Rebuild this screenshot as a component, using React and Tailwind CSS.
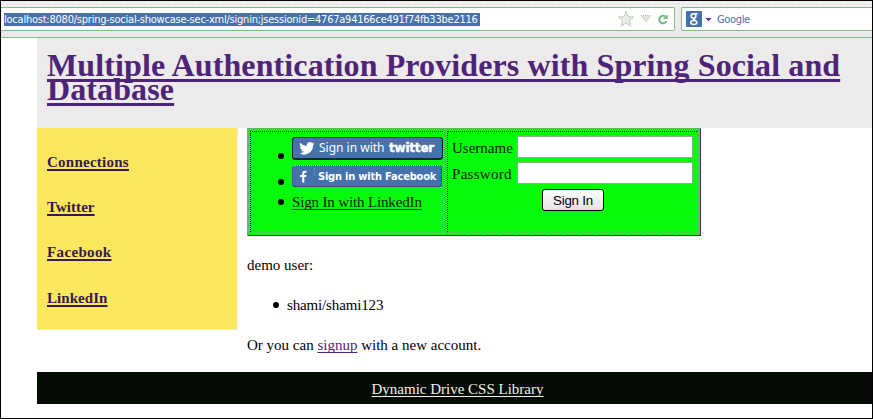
import React from 'react';

const DITHER = 'bg-[#edeaec] bg-[radial-gradient(#ffffff_0.7px,transparent_0.8px)] bg-[size:3px_3px]';

function AddressBar() {
  return (
    <div className="flex h-[24px] w-[674px] shrink-0 items-center rounded-r-[2px] border border-l-0 border-[#82bd87] bg-white pl-[3px]">
      <span className="block h-[13px] w-[476px] shrink-0 whitespace-nowrap bg-[#4672ac] font-['DejaVu_Sans_Condensed','DejaVu_Sans',sans-serif] text-[11px] leading-[13px] tracking-[-0.23px] text-white">
        localhost:8080/spring-social-showcase-sec-xml/signin;jsessionid=4767a94166ce491f74fb33be2116
      </span>
      <svg className="ml-[137px] shrink-0" width="18" height="18" viewBox="0 0 18 18">
        <path d="M9 1.5 11.2 6.7 16.7 7 12.5 10.7 13.9 16 9 13.2 4.1 16 5.5 10.7 1.3 7 6.8 6.7Z" fill="#edeaec" stroke="#9cc4a0" strokeDasharray="2 1" />
      </svg>
      <svg className="ml-[5px] shrink-0" width="12" height="10" viewBox="0 0 12 10">
        <path d="M1 1.500H11L6 8Z" fill="#e3e3e1" />
        <path d="M1 1.500H11L6 8Z" fill="none" stroke="#9dcca0" strokeDasharray="1 1" />
      </svg>
      <svg className="ml-[5px] shrink-0" width="12" height="13" viewBox="0 0 14 14">
        <path d="M9.800 3.600A4.400 4.400 0 1 0 11 8.800" fill="none" stroke="#76b57d" strokeWidth="2.300" />
        <path d="M12.500 1V6.500H7Z" fill="#76b57d" />
      </svg>
    </div>
  );
}

function SearchBar() {
  return (
    <div className="ml-[6px] flex h-[24px] flex-1 items-center rounded-l-[2px] border border-r-0 border-[#82bd87] bg-white pl-[4px]">
      <svg className="shrink-0" width="16" height="16" viewBox="0 0 16 16">
        <rect width="16" height="16" rx="1" fill="#4672ac" />
        <g fill="none" stroke="#fff" strokeWidth="1.500">
          <ellipse cx="7.500" cy="5" rx="2.400" ry="2.200" />
          <path d="M7.500 2.700H11.500M8 7.300C6.500 8.300 8 8.700 9.300 9.200" />
          <ellipse cx="7.800" cy="11.400" rx="3" ry="2" />
        </g>
      </svg>
      <svg className="ml-[3px] shrink-0" width="7" height="5" viewBox="0 0 7 5">
        <path d="M0.500 1H6.500L3.500 4.300Z" fill="#4e2a80" />
      </svg>
      <span className="ml-[5px] mt-[2px] font-['DejaVu_Sans_Condensed','DejaVu_Sans',sans-serif] text-[11px] leading-[14px] tracking-[-0.35px] text-[#4672ac]">Google</span>
    </div>
  );
}

function BrowserChrome() {
  return (
    <div>
      <div className={`h-[6px] ${DITHER}`} />
      <div className="flex h-[24px] bg-[#edeaec]">
        <AddressBar />
        <SearchBar />
      </div>
      <div className="h-[7px] border-b border-[#82bd87] bg-[#edeaec]" />
    </div>
  );
}

function Sidebar() {
  return (
    <nav className="flex h-[202px] w-[201px] flex-col border-b border-r border-dotted border-[#d9d6d8] bg-[#fde75f] bg-clip-padding pl-[10px] pt-[24px] text-[15px] font-bold leading-[20px] text-[#35194f]">
      <a className="h-[45px] w-max tracking-[0.25px] underline decoration-[2px] underline-offset-[2px] [text-decoration-skip-ink:none]">Connections</a>
      <a className="h-[45px] w-max tracking-[0.05px] underline decoration-[2px] underline-offset-[2px] [text-decoration-skip-ink:none]">Twitter</a>
      <a className="h-[46px] w-max tracking-[0.36px] underline decoration-[2px] underline-offset-[2px] [text-decoration-skip-ink:none]">Facebook</a>
      <a className="h-[20px] w-max tracking-[0.06px] underline decoration-[2px] underline-offset-[2px] [text-decoration-skip-ink:none]">LinkedIn</a>
    </nav>
  );
}

function Bullet() {
  return <span className="block h-[6px] w-[6px] shrink-0 rounded-full bg-black" />;
}

function TwitterButton() {
  return (
    <div className="flex h-[23px] w-[151px] items-center whitespace-nowrap rounded-[3px] border border-b-2 border-[#152539] bg-[#4672ac] text-white">
      <svg className="ml-[6px] shrink-0" width="16" height="13" viewBox="0 0 24 20">
        <path fill="#fff" d="M23.6 2.4a9 9 0 0 1-2.8.8A4.8 4.8 0 0 0 23 .5a9 9 0 0 1-3.1 1.2A4.8 4.8 0 0 0 11.7 6 13.7 13.7 0 0 1 1.7 1a4.8 4.8 0 0 0 1.5 6.4A4.8 4.8 0 0 1 1 6.800c0 2.300 1.600 4.400 3.900 4.800a4.800 4.800 0 0 1-2.200.1 4.800 4.800 0 0 0 4.500 3.400A9.700 9.700 0 0 1 .1 17.100 13.700 13.700 0 0 0 21.200 4.900a9.800 9.800 0 0 0 2.400-2.500Z" />
      </svg>
      <span className="ml-[4px] w-[67px] shrink-0 font-['Noto_Sans',sans-serif] text-[12px] leading-[18px]">Sign in with</span>
      <span className="ml-[3px] font-['DejaVu_Sans',sans-serif] text-[12px] font-bold leading-[18px] tracking-[-0.2px] [-webkit-text-stroke:0.4px_white]">twitter</span>
    </div>
  );
}

function FacebookButton() {
  return (
    <div className="flex h-[22px] w-[150px] items-center whitespace-nowrap rounded-[3px] border border-dotted border-b-[#152539] border-l-[#35546f] border-r-[#152539] border-t-[#b9c9d8] bg-[#4672ac] text-white">
      <svg className="ml-[6px] shrink-0" width="9" height="13" viewBox="0 0 9 13">
        <path d="M3.200 12.500V7H1V4.900H3.200V3.500C3.200 1.500 4.200.8 5.800.8H7.500V2.700H6.400C5.600 2.700 5.300 3 5.300 3.700V4.900H7.500L7.200 7H5.300V12.500Z" fill="#fff" />
      </svg>
      <span className="ml-[6px] mb-[9px] h-[8px] w-[1px] shrink-0 border-l border-dotted border-[#6b93a4]" />
      <span className="ml-[3px] mt-[2px] font-['DejaVu_Sans_Condensed','DejaVu_Sans',sans-serif] text-[11px] font-bold leading-[18px] tracking-[-0.2px]">Sign in with Facebook</span>
    </div>
  );
}

function LoginTable() {
  return (
    <section className="flex h-[108px] w-[454px] gap-[2px] border-2 border-b border-r border-b-[#203520] border-l-[#76ac78] border-r-[#4e2474] border-t-[#65b968] bg-[#06fb0a] pb-[1px] pr-[1px] pl-px pt-px">
      <ul className="flex w-[195px] flex-col border border-b-2 border-r-2 border-dotted border-b-[#7cab7c] border-l-black border-r-[#7cab7c] border-t-black pl-[27px] pt-[5px]">
        <li className="flex h-[28px] items-start">
          <span className="mt-[16px]"><Bullet /></span>
          <span className="ml-[8px]"><TwitterButton /></span>
        </li>
        <li className="flex h-[27px] items-start">
          <span className="mt-[14px]"><Bullet /></span>
          <span className="ml-[8px]"><FacebookButton /></span>
        </li>
        <li className="flex h-[20px] items-center">
          <Bullet />
          <a className="ml-[8px] whitespace-nowrap text-[15px] leading-[20px] tracking-[-0.15px] text-[#132413] underline decoration-1 underline-offset-[2px] [text-decoration-skip-ink:none]">Sign In with LinkedIn</a>
        </li>
      </ul>
      <form className="flex flex-1 flex-col border border-b-2 border-r-2 border-dotted border-b-[#7cab7c] border-l-black border-r-[#7cab7c] border-t-black pl-[4px] pt-[4px] text-[15px] text-[#102010]">
        <label className="flex h-[26px] items-start">
          <span className="w-[65px] shrink-0 pt-[2px] leading-[20px] tracking-[0px]">Username</span>
          <input className="h-[22px] w-[176px] border border-[#8caf8c] bg-white outline-none" />
        </label>
        <label className="flex h-[27px] items-start">
          <span className="w-[65px] shrink-0 pt-[2px] leading-[20px] tracking-[0.3px]">Password</span>
          <input className="h-[22px] w-[176px] border border-[#8caf8c] bg-white outline-none" />
        </label>
        <button type="button" className="ml-[90px] h-[22px] w-[62px] rounded-[3px] border border-black bg-gradient-to-b from-white to-[#e4e2e3] pt-px font-['Liberation_Sans',Arial,sans-serif] text-[13.33px] leading-[19px] tracking-[-0.2px] text-black">Sign In</button>
      </form>
    </section>
  );
}

export default function App() {
  return (
    <div className="h-[419px] w-[873px] overflow-hidden border border-black bg-white font-['Liberation_Serif','Times_New_Roman',serif] text-black">
      <BrowserChrome />
      <div className="ml-[36px]">
        <header className="h-[90px] bg-[#edeaec] pl-[10px] pt-[15px]">
          <h1 className="whitespace-nowrap text-[32px] font-bold leading-[24px] tracking-[0.11px] text-[#4e2478] underline decoration-[3px] underline-offset-[3px] [text-decoration-skip-ink:none]">
            Multiple Authentication Providers with Spring Social and<br />Database
          </h1>
        </header>
        <div className="flex h-[244px] gap-[9px]">
          <Sidebar />
          <main className="text-[15px] leading-[20px]">
            <LoginTable />
            <p className="mt-[19px]">demo user:</p>
            <ul className="mt-[20px] pl-[26px]">
              <li className="flex items-center"><Bullet /><span className="ml-[8px] tracking-[-0.15px]">shami/shami123</span></li>
            </ul>
            <p className="mt-[20px]">
              Or you can <a className="text-[#4e2478] underline decoration-1 underline-offset-[2px] [text-decoration-skip-ink:none]">signup</a> with a new account.
            </p>
          </main>
        </div>
        <footer className="flex h-[32px] justify-center bg-[#040b03] pt-[7px] text-[15px] leading-[20px]">
          <a className="mr-[-6px] text-[#f1efe9] underline decoration-1 underline-offset-[2px] [text-decoration-skip-ink:none]">Dynamic Drive CSS Library</a>
        </footer>
      </div>
    </div>
  );
}
